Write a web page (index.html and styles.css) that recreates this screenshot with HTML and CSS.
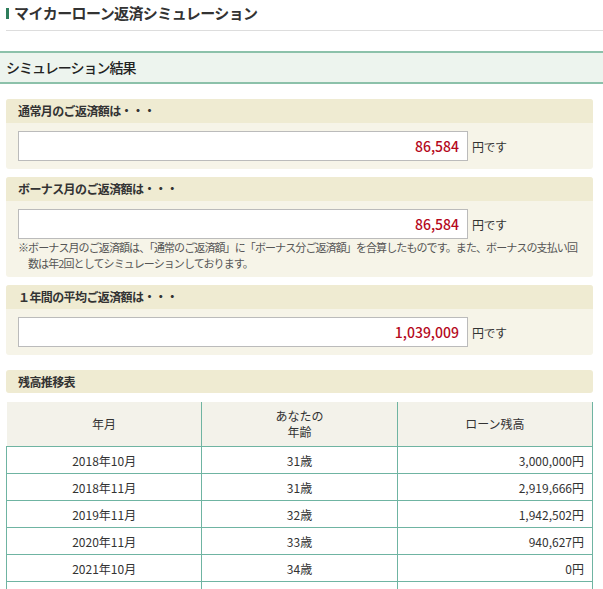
FILE: index.html
```html
<!DOCTYPE html>
<html lang="ja">
<head>
  <meta charset="UTF-8" />
  <title>マイカーローン返済シミュレーション</title>
  <link rel="stylesheet" href="styles.css">
</head>
<body>
  <h1 class="page-title">マイカーローン返済シミュレーション</h1>

  <h2 class="section-title">シミュレーション結果</h2>

  <div class="content">
    <div class="panel">
      <div class="panel-head">通常月のご返済額は・・・</div>
      <div class="panel-body">
        <div class="result-row">
          <div class="result-box">86,584</div>
          <span class="unit">円です</span>
        </div>
      </div>
    </div>

    <div class="panel">
      <div class="panel-head">ボーナス月のご返済額は・・・</div>
      <div class="panel-body with-note">
        <div class="result-row">
          <div class="result-box">86,584</div>
          <span class="unit">円です</span>
        </div>
        <p class="note">※ボーナス月のご返済額は、「通常のご返済額」に「ボーナス分ご返済額」を合算したものです。また、ボーナスの支払い回数は年2回としてシミュレーションしております。</p>
      </div>
    </div>

    <div class="panel panel-last">
      <div class="panel-head">１年間の平均ご返済額は・・・</div>
      <div class="panel-body">
        <div class="result-row">
          <div class="result-box">1,039,009</div>
          <span class="unit">円です</span>
        </div>
      </div>
    </div>

    <div class="panel-head single">残高推移表</div>

    <table class="balance">
      <thead>
        <tr>
          <th>年月</th>
          <th>あなたの<br>年齢</th>
          <th>ローン残高</th>
        </tr>
      </thead>
      <tbody>
        <tr><td>2018年10月</td><td>31歳</td><td class="num">3,000,000円</td></tr>
        <tr><td>2018年11月</td><td>31歳</td><td class="num">2,919,666円</td></tr>
        <tr><td>2019年11月</td><td>32歳</td><td class="num">1,942,502円</td></tr>
        <tr><td>2020年11月</td><td>33歳</td><td class="num">940,627円</td></tr>
        <tr><td>2021年10月</td><td>34歳</td><td class="num">0円</td></tr>
        <tr><td>&nbsp;</td><td>&nbsp;</td><td class="num">&nbsp;</td></tr>
      </tbody>
    </table>
  </div>
</body>
</html>
```

FILE: styles.css
```css
body {
  margin: 0;
  font-family: "Noto Sans CJK JP", "DejaVu Sans", sans-serif;
  font-size: 12px;
  color: #333;
  background: #fff;
}

.page-title {
  margin: 0 0 0 6px;
  padding: 3px 0 7px 8px;
  height: 20px;
  font-size: 15px;
  line-height: 20px;
  letter-spacing: -0.6px;
  font-weight: bold;
  color: #333;
  border-bottom: 1px solid #ddd;
  position: relative;
}
.page-title::before {
  content: "";
  position: absolute;
  left: 0;
  top: 8px;
  width: 3px;
  height: 11px;
  background: #2e7d5b;
}

.section-title {
  margin: 20px 0 0;
  padding: 0 6px;
  height: 29px;
  line-height: 29px;
  font-size: 14px;
  letter-spacing: -1px;
  font-weight: 500;
  color: #222;
  background: #edf4ee;
  border-top: 2px solid #8cc1aa;
  border-bottom: 2px solid #8cc1aa;
}

.content {
  padding: 15px 10px 0 6px;
}

.panel {
  background: #f6f4e8;
  border-radius: 3px;
  margin-bottom: 8px;
}
.panel-last {
  margin-bottom: 15px;
}

.panel-head {
  background: #efebd2;
  height: 24px;
  line-height: 24px;
  padding-left: 12px;
  font-weight: bold;
  font-size: 12px;
  letter-spacing: -0.6px;
  color: #333;
  border-radius: 3px 3px 0 0;
}
.panel-head.single {
  border-radius: 3px;
  height: 23px;
  line-height: 23px;
}

.panel-body {
  padding: 8px 12px 8px;
}
.panel-body.with-note {
  padding-bottom: 6px;
}

.result-row {
  display: flex;
  align-items: center;
}

.result-box {
  box-sizing: border-box;
  width: 450px;
  height: 30px;
  line-height: 28px;
  border: 1px solid #bbb;
  background: #fff;
  text-align: right;
  padding-right: 8px;
  font-size: 14px;
  font-weight: 500;
  color: #b5091c;
}

.unit {
  margin-left: 4px;
  font-size: 12px;
  letter-spacing: -0.5px;
  color: #333;
}

.note {
  margin: 0;
  padding-left: 10px;
  text-indent: -10px;
  font-size: 11px;
  line-height: 16px;
  letter-spacing: -0.9px;
  color: #555;
}

.balance {
  margin-top: 9px;
  width: 587px;
  border-collapse: collapse;
  table-layout: fixed;
}
.balance th {
  background: #f3f2ea;
  font-weight: normal;
  height: 42px;
  line-height: 16px;
  color: #333;
  border-right: 1px solid #6fb4a2;
  border-bottom: 1px solid #6fb4a2;
}
.balance td {
  height: 26px;
  padding: 0 8px;
  text-align: center;
  color: #333;
  border: 1px solid #6fb4a2;
}
.balance td.num {
  text-align: right;
}
```
